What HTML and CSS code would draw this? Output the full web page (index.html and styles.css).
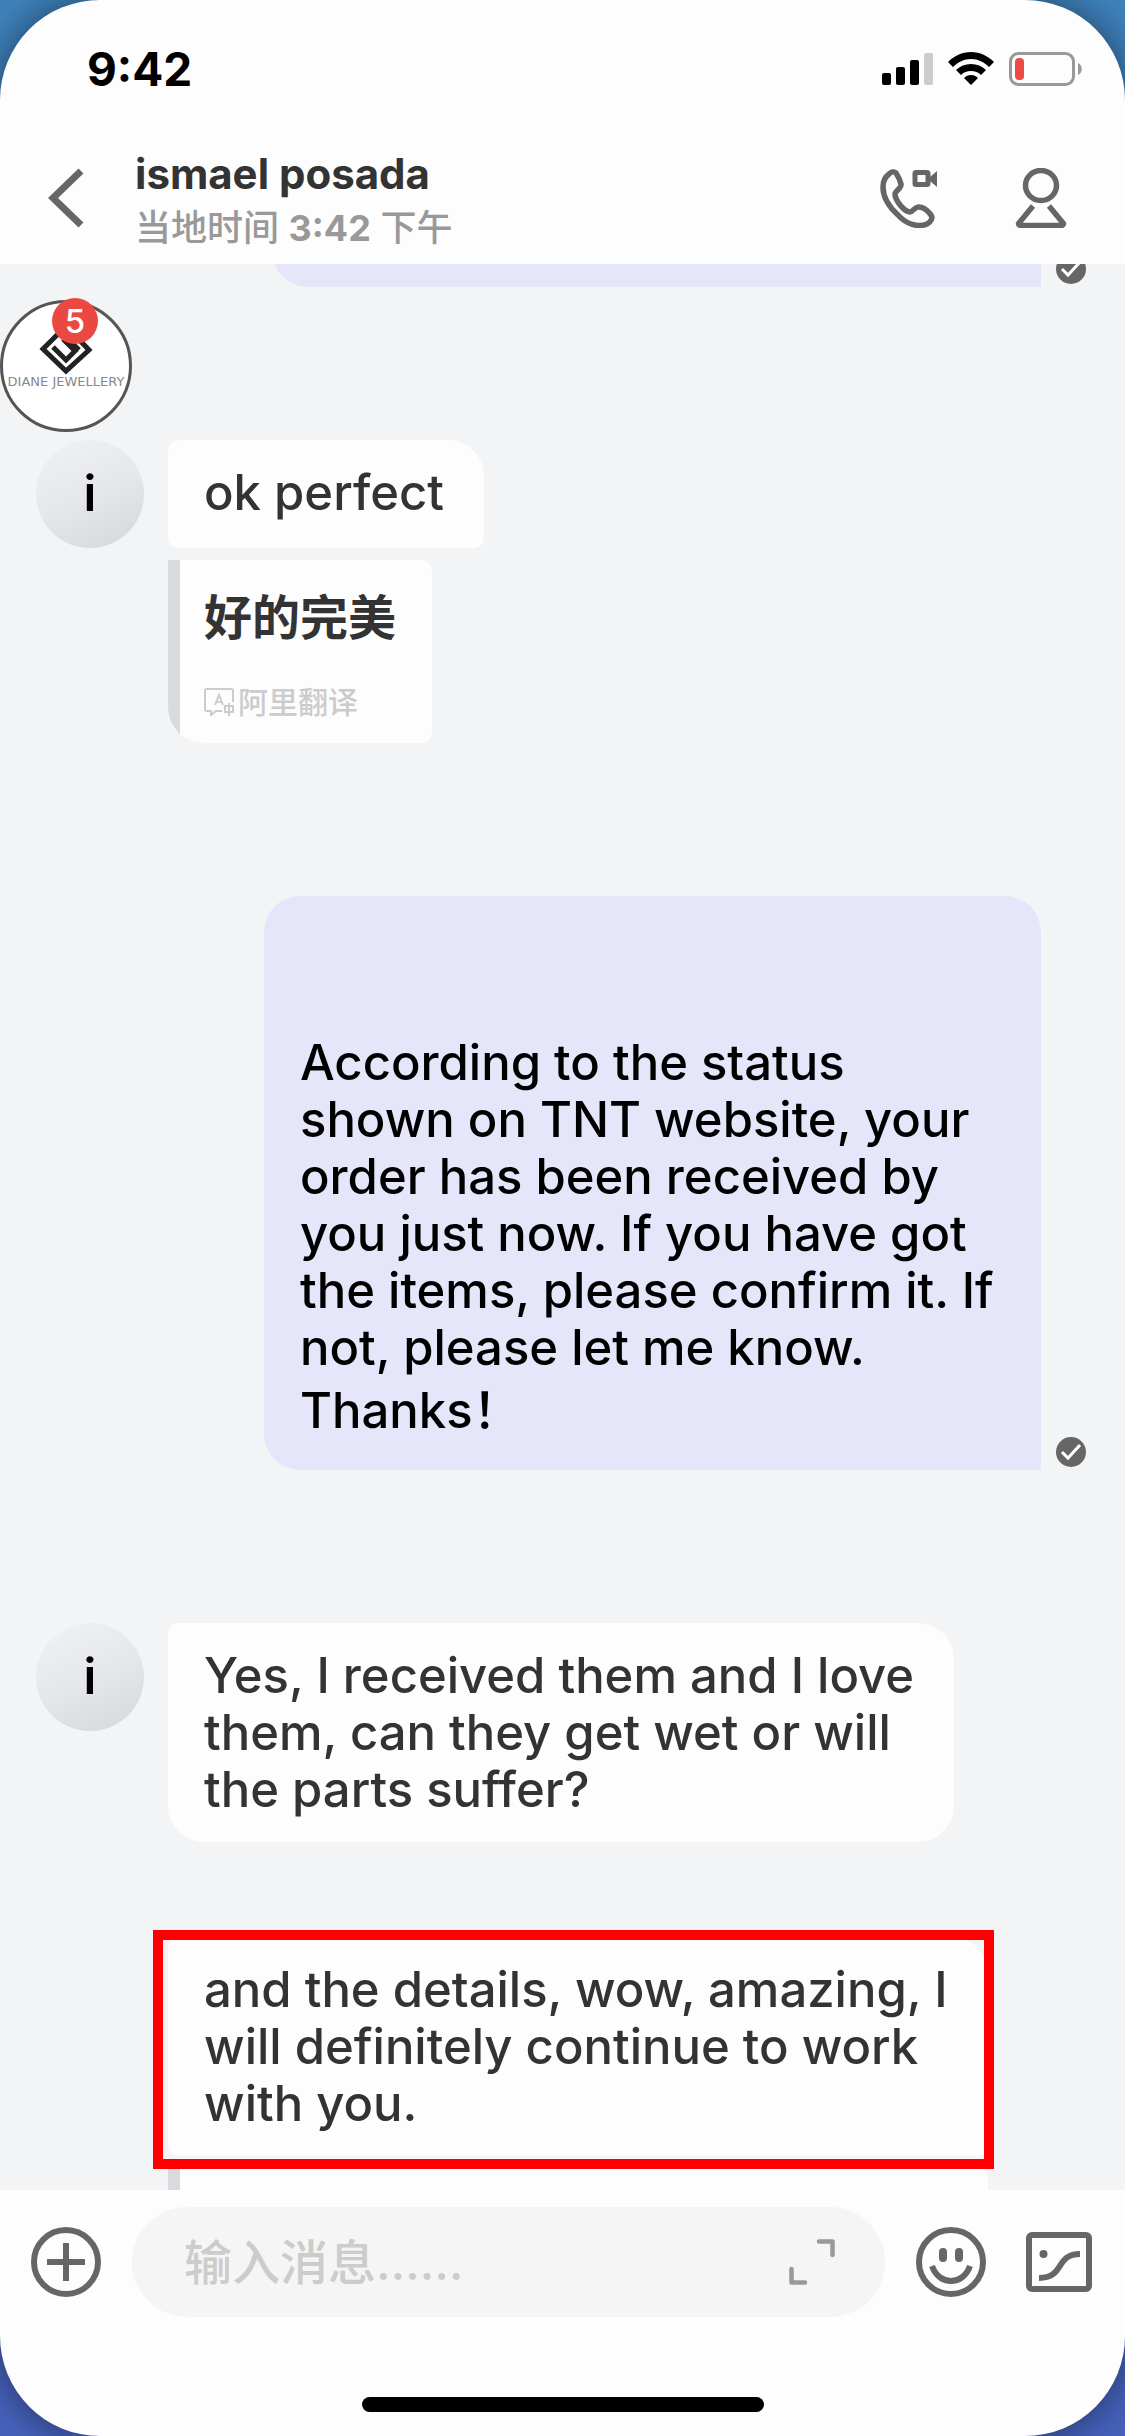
FILE: index.html
```html
<!DOCTYPE html>
<html lang="zh-CN">
<head>
<meta charset="utf-8">
<meta name="viewport" content="width=device-width">
<title>ismael posada</title>
<link rel="stylesheet" href="styles.css">
</head>
<body>
<div class="phone">
  <header>
    <div class="status">
      <span class="clock">9:42</span>
      <div class="indicators">
        <svg width="51" height="34" viewBox="0 0 51 34"><rect x="0" y="21" width="9" height="12" rx="2"/><rect x="14" y="15" width="9" height="18" rx="2"/><rect x="28" y="8" width="9" height="25" rx="2"/><rect x="42" y="1" width="9" height="32" rx="2" fill="#ccc"/></svg>
        <svg width="46" height="34" viewBox="0 0 46 34"><path d="M23 0C14 0 6 4 0 10l5 5c5-5 11-8 18-8s13 3 18 8l5-5C40 4 32 0 23 0z"/><path d="M23 12c-6 0-11 2-15 6l5 5c3-3 6-4 10-4s7 1 10 4l5-5c-4-4-9-6-15-6z"/><path d="M23 23c-3 0-5 1-7 3l7 7 7-7c-2-2-4-3-7-3z"/></svg>
        <svg width="74" height="34" viewBox="0 0 74 34"><rect x="1.500" y="1.500" width="63" height="31" rx="8" fill="none" stroke="#999" stroke-width="3"/><path d="M69 11c5 2 5 10 0 12z" fill="#999"/><rect x="6" y="6" width="9" height="22" rx="4" fill="#ec4b43"/></svg>
      </div>
    </div>
    <nav class="bar">
      <button class="back" aria-label="返回"><svg width="36" height="60" viewBox="0 0 36 60"><path d="M33 3L5 30l28 27" fill="none" stroke="#666" stroke-width="7"/></svg></button>
      <div class="peer">
        <h1>ismael posada</h1>
        <p>当地时间 <b>3:42</b> 下午</p>
      </div>
      <button class="tool" aria-label="通话"><svg width="60" height="60" viewBox="0 0 60 60"><path d="M10 6c2-2 5-3 7-1 2 3 4 7 5 11 1 4-6 7-6 10 0 7 10 18 15 18 3 0 5-6 9-5 4 0 9 4 12 8 2 3 0 7-4 9-9 4-21 0-29-9C8 37 4 27 4 19c0-6 2-10 6-13z" fill="none" stroke="#666" stroke-width="5.500" stroke-linejoin="round"/><rect x="36" y="4.500" width="13" height="12" rx="1" fill="none" stroke="#666" stroke-width="5"/><path d="M51 9l7-6v16l-7-6z" fill="#666"/></svg></button>
      <button class="tool" aria-label="联系人"><svg width="52" height="60" viewBox="0 0 52 60" fill="none" stroke="#666" stroke-width="5.500"><ellipse cx="26" cy="17.500" rx="15.500" ry="15"/><path d="M18 38L4 55c-1 1 0 2.500 2 2.500h40c2 0 3-1.500 2-2.500L34 38" stroke-linejoin="round"/></svg></button>
    </nav>
  </header>

  <main>
    <section class="thread">
      <article class="sent cut">
        <div class="bubble"></div>
        <svg class="tick" viewBox="0 0 30 30"><circle cx="15" cy="15" r="15" fill="#666"/><path d="M6 15l6 6L24 8" fill="none" stroke="#fff" stroke-width="3"/></svg>
      </article>

      <article class="received">
        <div class="face">i</div>
        <div class="stack">
          <div class="bubble joined">ok perfect</div>
          <div class="translation">
            <p>好的完美</p>
            <small><svg width="30" height="28" viewBox="0 0 30 28" fill="none" stroke="#ccc" stroke-width="2"><path d="M29 14V3q0-2-2-2H3Q1 1 1 3v18q0 2 2 2h4v4l5-4h6"/><path d="M11 17l4-10 4 10M12 14h6"/><path d="M21 18h8v6h-8zM25 15v13"/></svg>阿里翻译</small>
          </div>
        </div>
      </article>

      <article class="sent">
        <div class="bubble"><br><br>According to the status<br>shown on TNT website, your<br>order has been received by<br>you just now. If you have got<br>the items, please confirm it. If<br>not, please let me know.<span class="last">Thanks！</span></div>
        <svg class="tick" viewBox="0 0 30 30"><circle cx="15" cy="15" r="15" fill="#666"/><path d="M6 15l6 6L24 8" fill="none" stroke="#fff" stroke-width="3"/></svg>
      </article>

      <article class="received">
        <div class="face">i</div>
        <div class="stack">
          <div class="bubble">Yes, I received them and I love<br>them, can they get wet or will<br>the parts suffer?</div>
          <div class="bubble joined next marked">and the details, wow, amazing, I<br>will definitely continue to work<br>with you.</div>
          <div class="translation wide"></div>
        </div>
      </article>
    </section>

    <a class="shop" href="#shop" aria-label="DIANE JEWELLERY">
      <span class="disc">
        <svg width="54" height="54" viewBox="0 0 54 54" fill="none" stroke="#222" stroke-width="5"><path d="M27 4L4 27l23 22 23-21L27 4z"/><path d="M14 25l13 13 9-9-12-12M25 13l15 15"/></svg>
        <span class="brand">DIANE JEWELLERY</span>
      </span>
      <span class="count">5</span>
    </a>
  </main>

  <footer>
    <form class="composer">
      <button type="button" aria-label="更多"><svg width="70" height="70" viewBox="0 0 70 70" fill="none" stroke="#666" stroke-width="6"><circle cx="35" cy="35" r="32"/><path d="M35 16v38M16 35h38"/></svg></button>
      <div class="field">
        <input type="text" aria-label="输入消息" placeholder="输入消息……">
        <button type="button" aria-label="展开"><svg width="46" height="46" viewBox="0 0 46 46" fill="none" stroke="#999" stroke-width="4.500" stroke-linejoin="round" stroke-linecap="round"><path d="M30 2.500h13.500V16M2.500 30v13.500H16"/></svg></button>
      </div>
      <button type="button" aria-label="表情"><svg width="70" height="70" viewBox="0 0 70 70" fill="none" stroke="#666" stroke-width="6"><circle cx="35" cy="35" r="32"/><path d="M16 39c7 20 31 20 38 0"/><path d="M27 25v6M43 25v6" stroke-width="8" stroke-linecap="round"/></svg></button>
      <button type="button" aria-label="图片"><svg width="66" height="60" viewBox="0 0 66 60" fill="none" stroke="#666" stroke-width="6"><rect x="3" y="3" width="60" height="54" rx="3"/><path d="M13 46c26 0 16-24 41-24"/><circle cx="17.500" cy="22" r="4" fill="#666" stroke="none"/></svg></button>
    </form>
    <div class="home"></div>
  </footer>
</div>
</body>
</html>
```
FILE: styles.css
```css
* { box-sizing: border-box; }

body {
  margin: 0;
  background: linear-gradient(#3f83bd, #4762bd);
  font-family: Inter, "Noto Sans CJK SC", sans-serif;
  font-weight: 500;
  color: #333;
}

h1, p { margin: 0; }

svg { display: block; flex: none; }

button {
  display: block;
  flex: none;
  padding: 0;
  border: 0;
  background: none;
}

.phone {
  display: flex;
  flex-direction: column;
  height: 100vh;
  overflow: hidden;
  border-radius: 100px;
  background: #fdfdfd;
  box-shadow: 0 0 40px rgba(0, 0, 0, .5);
}

/* Status bar and title */
.status {
  display: flex;
  align-items: center;
  justify-content: space-between;
  height: 138px;
  padding: 0 42px 0 87px;
}

.clock {
  font-size: 46px;
  font-weight: 700;
  color: #000;
}

.indicators { display: flex; gap: 15px; }

.bar {
  display: flex;
  align-items: center;
  height: 126px;
  padding: 0 58px 6px 48px;
}

.peer {
  flex: 1;
  margin-left: 51px;
  padding-top: 4px;
}

.peer h1 {
  font-size: 42px;
  line-height: 52px;
  font-weight: 700;
}

.peer p {
  margin-top: 4px;
  font-size: 36px;
  line-height: 48px;
  color: #999;
}

.peer b { font-weight: 700; }

.tool + .tool { margin-left: 76px; }

/* Conversation */
main {
  position: relative;
  flex: 1;
  min-height: 0;
  overflow: hidden;
  background: #f2f4f6;
}

.thread {
  display: flex;
  flex-direction: column;
  gap: 153px;
}

.received {
  display: flex;
  gap: 24px;
  padding-left: 36px;
}

.sent {
  display: flex;
  justify-content: flex-end;
  align-items: flex-end;
  gap: 15px;
  padding-right: 39px;
}

.cut { margin-top: -85px; }

.tick {
  width: 30px;
  height: 30px;
  margin-bottom: 3px;
}

.face {
  flex: none;
  width: 108px;
  height: 108px;
  border-radius: 50%;
  background: linear-gradient(155deg, #f1f2f5, #e6e7eb 50%, #d5d6da);
  color: #000;
  font-size: 49px;
  font-weight: 600;
  line-height: 108px;
  text-align: center;
}

.stack {
  display: flex;
  flex-direction: column;
  align-items: flex-start;
}

.bubble {
  display: flow-root;
  min-height: 105px;
  padding: 24px 40px 24px 36px;
  border-radius: 10px 36px 36px 36px;
  background: #fdfdfd;
  font-size: 49px;
  line-height: 57px;
}

.sent .bubble {
  width: 777px;
  max-width: 80%;
  padding: 24px 36px;
  border-radius: 36px 36px 0 36px;
  background: #e6e6fb;
  color: #000;
}

.cut .bubble {
  width: 769px;
  min-height: 108px;
}

.last {
  display: block;
  line-height: 70px;
}

.joined { border-radius: 10px 36px 10px 10px; }

.face + .stack > .joined:first-child { min-height: 108px; }

.next { margin-top: 95px; }

.marked { position: relative; }

.marked::after {
  content: "";
  position: absolute;
  z-index: 1;
  inset: -7px -6px -13px -15px;
  border: 10px solid #f00;
}

.translation {
  margin-top: 12px;
  padding: 24px 36px;
  border-radius: 0 10px 10px 36px;
  background: linear-gradient(to right, #d9dadd 12px, #fdfdfd 12px);
}

.translation p {
  font-size: 48px;
  font-weight: 600;
  line-height: 67px;
}

.translation small {
  display: flex;
  align-items: center;
  gap: 4px;
  margin-top: 34px;
  font-size: 30px;
  line-height: 34px;
  color: #ccc;
}

.wide {
  align-self: stretch;
  height: 183px;
}

/* Floating shop head */
.shop {
  position: absolute;
  top: 36px;
  left: 0;
  color: #888;
  text-decoration: none;
}

.disc {
  display: flex;
  flex-direction: column;
  align-items: center;
  width: 132px;
  height: 132px;
  padding-top: 19px;
  overflow: hidden;
  border: 3px solid #555;
  border-radius: 50%;
  background: #fff;
}

.brand {
  font: 13px/12px "DejaVu Sans", sans-serif;
  white-space: nowrap;
}

.count {
  position: absolute;
  top: -2px;
  left: 52px;
  width: 46px;
  height: 46px;
  border-radius: 50%;
  background: #ec4842;
  color: #fff;
  font-size: 33px;
  line-height: 46px;
  text-align: center;
}

/* Message box */
.composer {
  display: flex;
  align-items: center;
  height: 144px;
  padding: 0 33px 0 31px;
}

.field {
  display: flex;
  align-items: center;
  flex: 1;
  min-width: 0;
  height: 110px;
  margin: 0 31px;
  padding: 0 50px 0 52px;
  border-radius: 55px;
  background: #f5f5f5;
}

.field input {
  flex: 1;
  min-width: 0;
  padding: 0;
  border: 0;
  outline: 0;
  background: none;
  font: inherit;
  font-size: 48px;
}

.field input::placeholder { color: #ccc; }

.composer > button:last-child { margin-left: 40px; }

.home {
  width: 402px;
  height: 15px;
  margin: 63px auto 24px;
  border-radius: 8px;
  background: #000;
}
```
